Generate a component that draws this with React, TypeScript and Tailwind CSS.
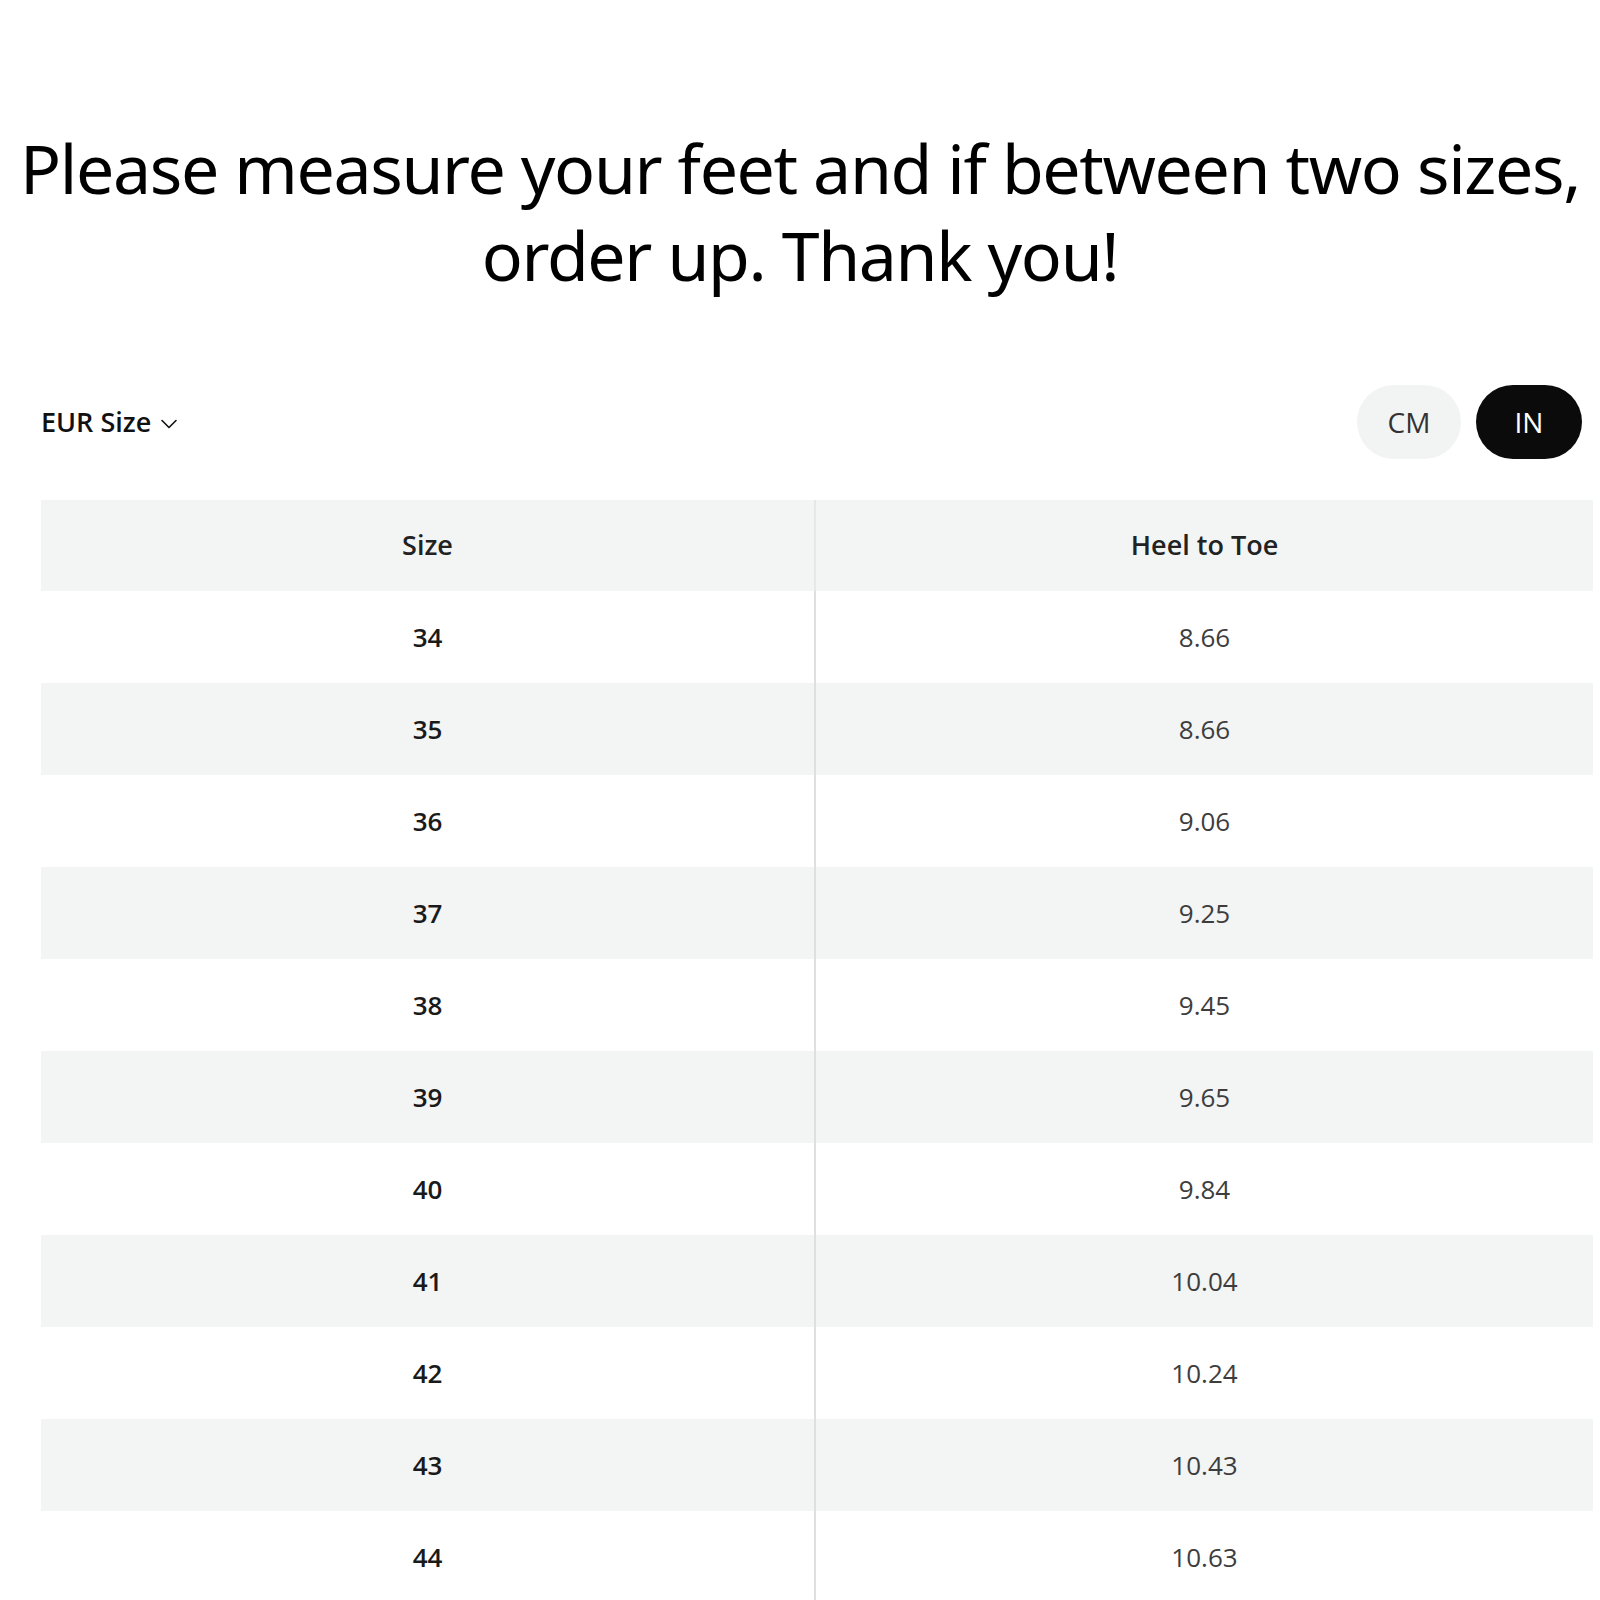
import { ChevronDown } from 'lucide-react';

const rows = [
  ['34', '8.66'],
  ['35', '8.66'],
  ['36', '9.06'],
  ['37', '9.25'],
  ['38', '9.45'],
  ['39', '9.65'],
  ['40', '9.84'],
  ['41', '10.04'],
  ['42', '10.24'],
  ['43', '10.43'],
  ['44', '10.63'],
];

export default function App() {
  return (
    <div className="min-h-[1600px] w-[1600px] bg-white overflow-hidden font-['Noto_Sans',sans-serif]">
      <h1 className="pt-[124px] text-center text-[68px] leading-[87px] tracking-[-0.02em] text-black font-normal">
        Please measure your feet and if between two sizes,
        <br />
        order up. Thank you!
      </h1>

      <div className="mt-[87px] pl-[41px] pr-[7px]">
        <div className="flex items-center justify-between pr-[11px]">
          <button className="flex items-center gap-[4px] text-[27px] font-semibold text-[#111] font-['Open_Sans',sans-serif]">
            EUR Size
            <ChevronDown className="w-[28px] h-[28px] mt-[4px]" strokeWidth={1.4} />
          </button>
          <div className="flex items-center gap-[15px]">
            <button className="w-[104px] h-[74px] rounded-full bg-[#f2f3f3] text-[28px] text-[#333] font-['Open_Sans',sans-serif]">
              CM
            </button>
            <button className="w-[106px] h-[74px] rounded-full bg-[#0b0b0b] text-[28px] text-white font-['Open_Sans',sans-serif]">
              IN
            </button>
          </div>
        </div>

        <div className="mt-[41px] font-['Open_Sans',sans-serif]">
          <div className="grid grid-cols-[773px_1fr] h-[91px] bg-[#f3f4f4] text-[27px] font-semibold text-[#222]">
            <div className="flex items-center justify-center">Size</div>
            <div className="flex items-center justify-center border-l-2 border-[#e6e7e7]">Heel to Toe</div>
          </div>
          {rows.map(([size, len], i) => (
            <div
              key={size}
              className={`grid grid-cols-[773px_1fr] h-[92px] ${i % 2 === 1 ? 'bg-[#f3f4f4]' : 'bg-white'}`}
            >
              <div className="flex items-center justify-center text-[26px] font-semibold text-[#1a1a1a]">
                {size}
              </div>
              <div className="flex items-center justify-center border-l-2 border-[#dedfdf] text-[26px] font-normal text-[#3d3d3d]">
                {len}
              </div>
            </div>
          ))}
        </div>
      </div>
    </div>
  );
}
